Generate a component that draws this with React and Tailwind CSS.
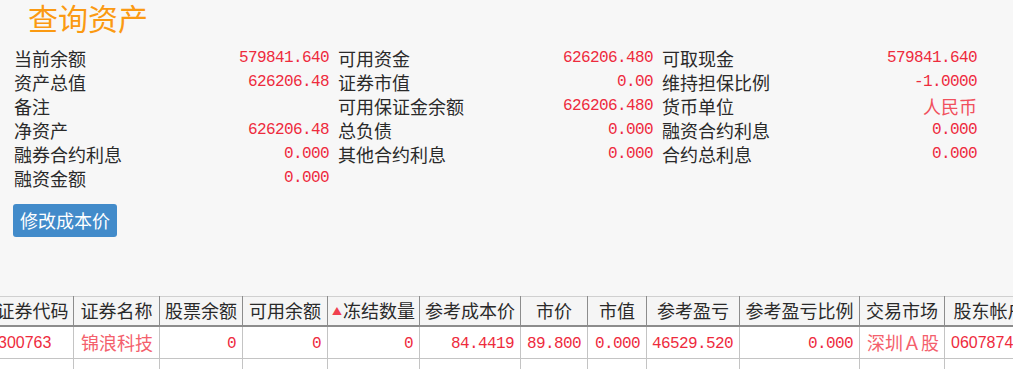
import React from 'react';

const cjk = { fontFamily: '"Noto Sans CJK SC", "Noto Sans", sans-serif' };
const mono = { fontFamily: '"Liberation Mono", "Noto Sans CJK SC", monospace' };
const sans = { fontFamily: '"Liberation Sans", "Noto Sans CJK SC", sans-serif' };

const info = [
    [['当前余额', '579841.640'], ['可用资金', '626206.480'], ['可取现金', '579841.640']],
    [['资产总值', '626206.48'], ['证券市值', '0.00'], ['维持担保比例', '-1.0000']],
    [['备注', ''], ['可用保证金余额', '626206.480'], ['货币单位', '人民币']],
    [['净资产', '626206.48'], ['总负债', '0.000'], ['融资合约利息', '0.000']],
    [['融券合约利息', '0.000'], ['其他合约利息', '0.000'], ['合约总利息', '0.000']],
    [['融资金额', '0.000']],
];

const columns = [
    { title: '证券代码', w: 82 },
    { title: '证券名称', w: 86 },
    { title: '股票余额', w: 83 },
    { title: '可用余额', w: 85 },
    { title: '冻结数量', w: 92, sort: true },
    { title: '参考成本价', w: 101 },
    { title: '市价', w: 67 },
    { title: '市值', w: 59 },
    { title: '参考盈亏', w: 93 },
    { title: '参考盈亏比例', w: 120 },
    { title: '交易市场', w: 85 },
    { title: '股东帐户', w: 90 },
];

const row = [
    { v: '300763', kind: 'sans' },
    { v: '锦浪科技', kind: 'cn' },
    { v: '0', kind: 'num' },
    { v: '0', kind: 'num' },
    { v: '0', kind: 'num' },
    { v: '84.4419', kind: 'num' },
    { v: '89.800', kind: 'num' },
    { v: '0.000', kind: 'num' },
    { v: '46529.520', kind: 'num' },
    { v: '0.000', kind: 'num' },
    { v: '深圳Ａ股', kind: 'cn' },
    { v: '0607874000', kind: 'sans' },
];

function Value({ text }) {
    if (/^[-0-9.]+$/.test(text)) {
        return <span className="text-[16px] tracking-[-0.6px] text-[#ee2b3d]" style={mono}>{text}</span>;
    }
    return <span className="text-[18px] text-[#f1505d]" style={cjk}>{text}</span>;
}

function Cell({ cell }) {
    if (cell.kind === 'num') {
        return (
            <td className="border-x border-[#c4c4c4] pr-[6px] text-right whitespace-nowrap">
                <span className="text-[16px] tracking-[-0.6px] text-[#ee2b3d]" style={mono}>{cell.v}</span>
            </td>
        );
    }
    if (cell.kind === 'sans') {
        return (
            <td className="border-x border-[#c4c4c4] pl-[6px] text-left whitespace-nowrap overflow-hidden">
                <span className="text-[16px] text-[#ee2b3d]" style={sans}>{cell.v}</span>
            </td>
        );
    }
    return (
        <td className="border-x border-[#c4c4c4] pl-[7px] text-left whitespace-nowrap">
            <span className="text-[18px] text-[#f4606c]" style={cjk}>{cell.v}</span>
        </td>
    );
}

export default function App() {
    return (
        <div className="w-[1013px] h-[369px] bg-[#f7f7f7] overflow-hidden" style={cjk}>
            <h1 className="pl-[28px] h-[36px] leading-[34px] text-[30px] font-normal text-[#fb9a12]">查询资产</h1>

            <div className="mt-[10px] pl-[14px] grid grid-cols-[315px_315px_315px] gap-x-[9px]">
                {info.map((r, i) =>
                    r.map(([label, value], j) => (
                        <div key={`${i}-${j}`} className="h-[24px] flex items-center justify-between">
                            <span className="text-[18px] leading-[24px] text-[#2a2a2a]">{label}</span>
                            <Value text={value} />
                        </div>
                    ))
                )}
            </div>

            <button className="ml-[13px] mt-[14px] w-[104px] h-[33px] rounded-[3px] bg-[#428bca] text-white text-[18px] leading-[33px]">
                修改成本价
            </button>

            <div className="mt-[59px] bg-white overflow-hidden">
                <table className="-ml-[9px] border-collapse table-fixed" style={{ width: columns.reduce((s, c) => s + c.w, 0) }}>
                    <colgroup>
                        {columns.map((c) => (
                            <col key={c.title} style={{ width: c.w }} />
                        ))}
                    </colgroup>
                    <thead>
                        <tr className="h-[29px] bg-[#f5f5f5] border-t border-[#d0d0d0] border-b-2 border-b-[#8c8c8c]">
                            {columns.map((c) => (
                                <th key={c.title} className="border-x border-[#8c8c8c] px-0 text-center font-normal text-[18px] leading-[27px] text-[#2a2a2a] whitespace-nowrap">
                                    {c.sort && <span className="text-[10px] text-[#f04050] align-[3px] mr-[1px]">▲</span>}
                                    {c.title}
                                </th>
                            ))}
                        </tr>
                    </thead>
                    <tbody>
                        <tr className="h-[33px] border-b border-[#c4c4c4]">
                            {row.map((cell, i) => (
                                <Cell key={i} cell={cell} />
                            ))}
                        </tr>
                        <tr className="h-[33px]">
                            {row.map((_, i) => (
                                <td key={i} className="border-x border-[#c4c4c4]" />
                            ))}
                        </tr>
                    </tbody>
                </table>
            </div>
        </div>
    );
}
